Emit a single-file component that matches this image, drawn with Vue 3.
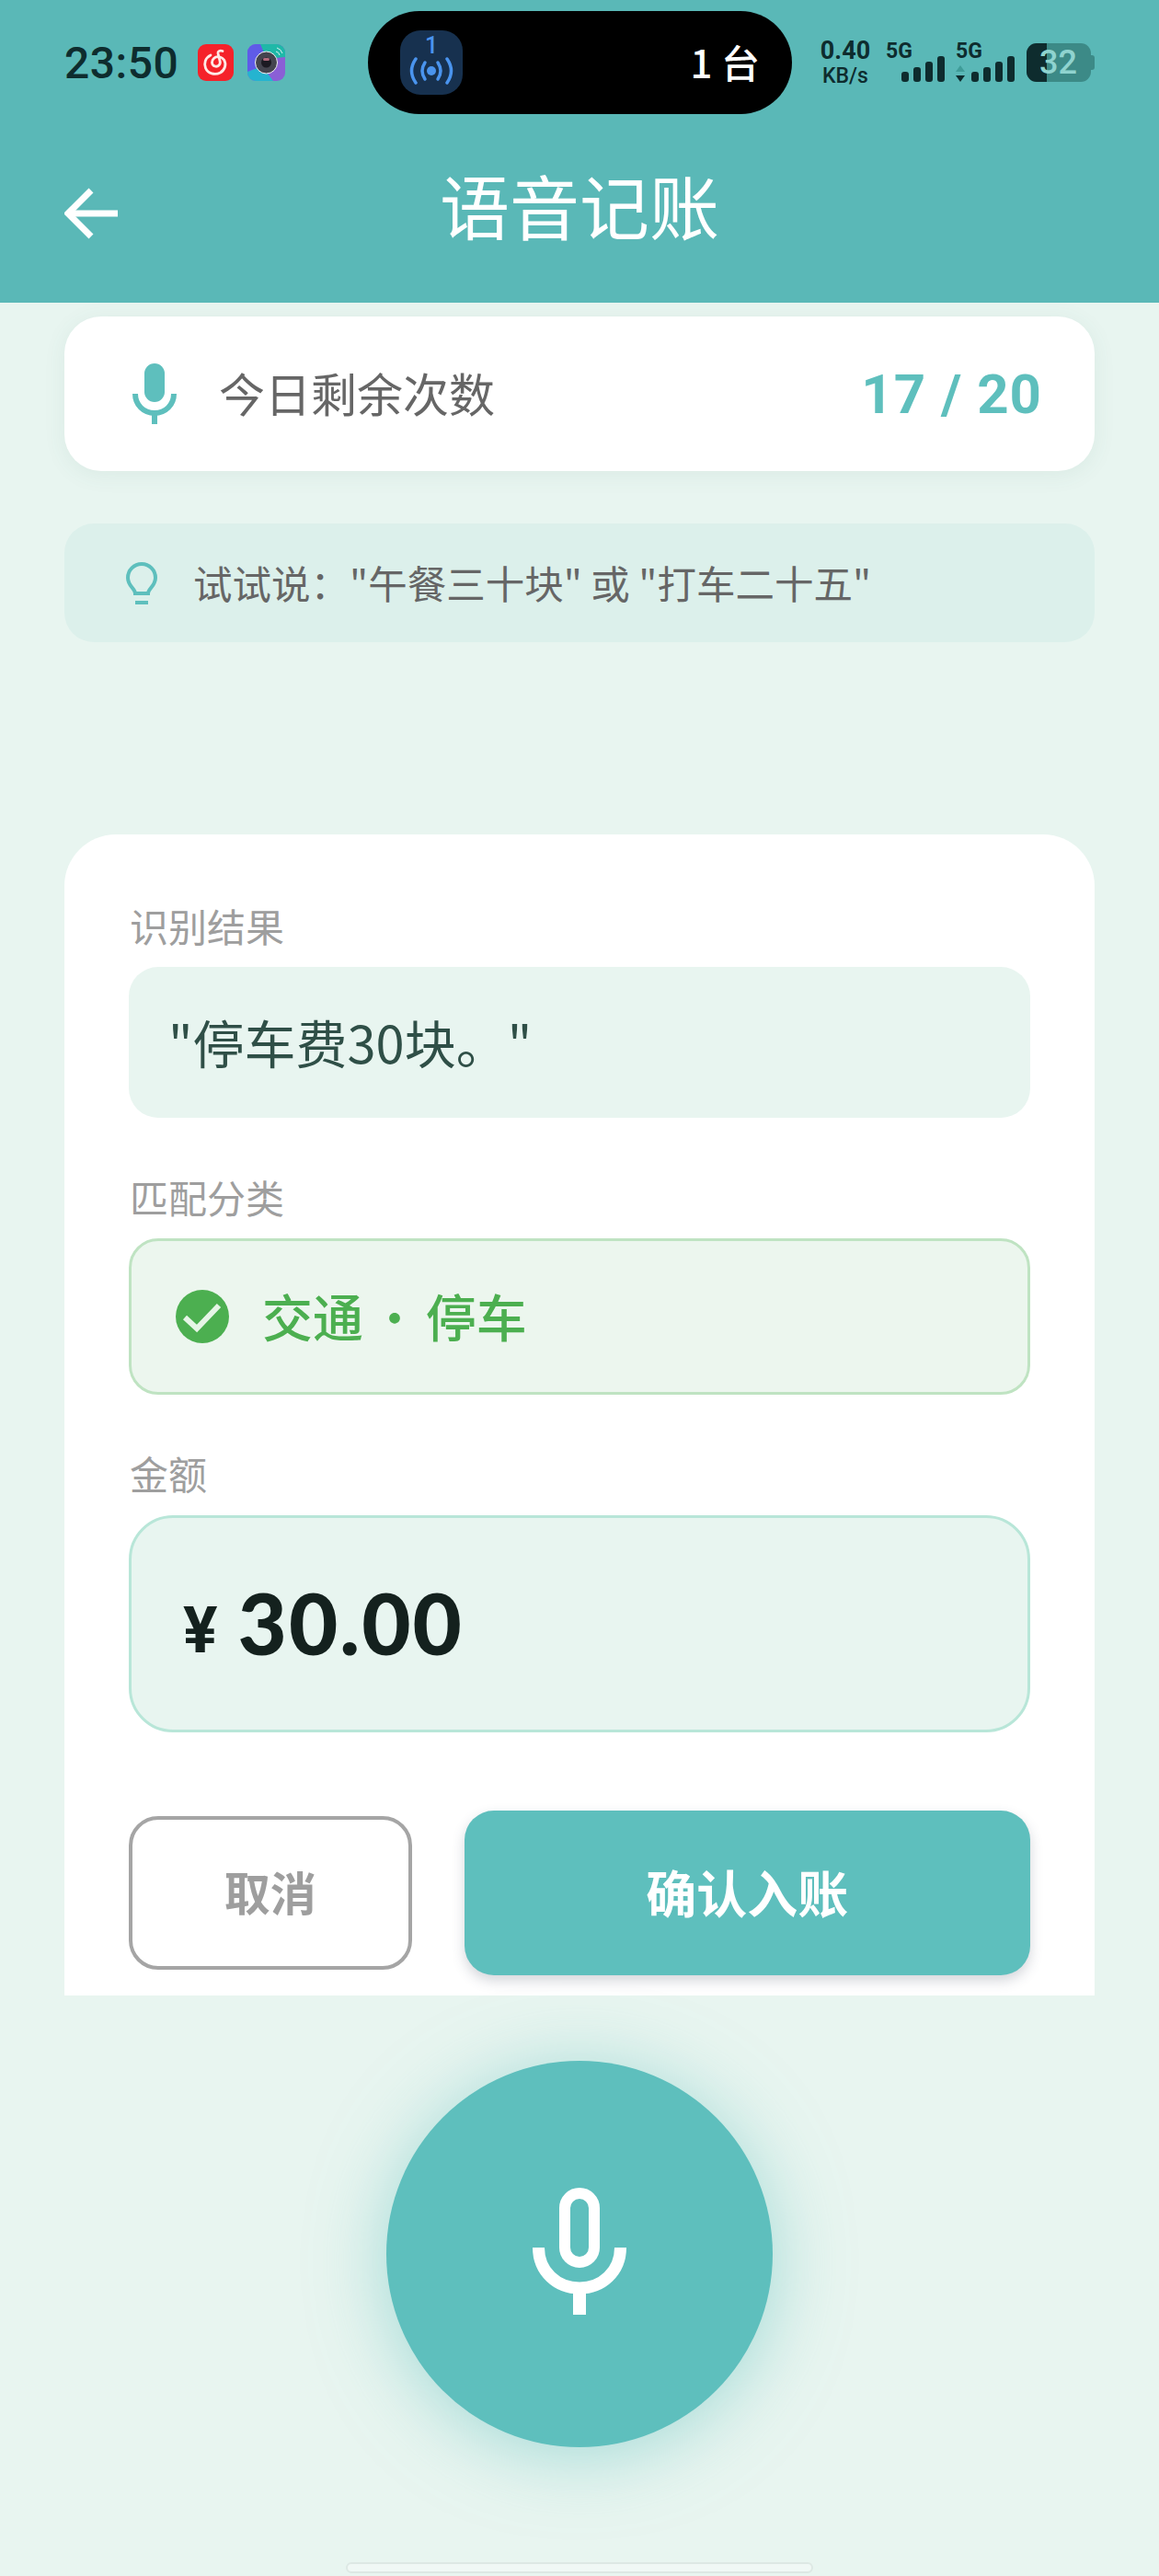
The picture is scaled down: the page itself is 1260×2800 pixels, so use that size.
<template>
  <div class="page">
    <header class="top">
      <!-- status bar -->
      <div class="status">
        <span class="time">23:50</span>
        <svg class="app-icon music" viewBox="0 0 39 40">
          <rect width="39" height="40" rx="9" fill="#f5222a" />
          <path
            d="M14 12C8 15 6.500 21 8.500 26c2.500 6 10 8 16 5 5-3 7-9 4-14-2-3-6-4-9-3-3 1.500-5 5-3.500 8 1.500 2.500 5 3 7 1 1.500-1.500 1.500-3.500 1-5L22 10c-.4-2 1.500-3.500 5-2.500"
            fill="none"
            stroke="#ffe9e6"
            stroke-width="2.800"
            stroke-linecap="round"
          />
        </svg>
        <svg class="app-icon cam" viewBox="0 0 41 40">
          <defs>
            <clipPath id="camClip"><rect width="41" height="40" rx="9" /></clipPath>
          </defs>
          <g clip-path="url(#camClip)">
            <rect width="41" height="40" fill="#8a5fd6" />
            <path d="M0 0h14l8 12-6 12L0 30z" fill="#5f5be8" />
            <path d="M14 0h27v14l-20 2z" fill="#1fb8a8" />
            <path d="M0 30l16-6 12 16H0z" fill="#25b4d0" />
          </g>
          <circle cx="20.500" cy="20" r="12" fill="#45454f" stroke="#f4f4f8" stroke-width="1" />
          <circle cx="20.500" cy="20" r="5.500" fill="#1c1a22" />
          <rect x="17" y="15" width="7" height="3" rx="1.500" fill="#b06a7c" />
          <path d="M31 8a5 5 0 0 1 4 4M32 4a9 9 0 0 1 6 6" fill="none" stroke="#d8f3ef" stroke-width="1" />
        </svg>
        <div class="island">
          <div class="hotspot">
            <span class="hotspot-num">1</span>
            <svg viewBox="0 0 52 30" class="hotspot-waves">
              <circle cx="26" cy="15" r="5" fill="#4a94ee" />
              <g fill="none" stroke="#4a94ee" stroke-width="3.500" stroke-linecap="round">
                <path d="M19 6Q13 15 19 24" />
                <path d="M33 6Q39 15 33 24" />
                <path d="M9 2Q0 15 9 28" />
                <path d="M43 2Q52 15 43 28" />
              </g>
            </svg>
          </div>
          <span class="island-text">1 台</span>
        </div>
        <div class="speed">
          <span class="speed-num">0.40</span>
          <span class="speed-unit">KB/s</span>
        </div>
        <div v-for="(sim, i) in sims" :key="i" class="sim" :class="{ second: sim.arrows }">
          <span class="sim-label">5G</span>
          <div class="sim-row">
            <svg v-if="sim.arrows" class="arrows" viewBox="0 0 10 18">
              <path d="M5 0l5 7H0z" fill="#3f9c98" />
              <path d="M0 11h10l-5 7z" fill="#0e2c2e" />
            </svg>
            <span
              v-for="h in barHeights"
              :key="h"
              class="bar"
              :style="{ height: h + 'px' }"
            ></span>
          </div>
        </div>
        <div class="battery">
          <span class="battery-fill"></span>
          <span class="battery-num">32</span>
          <span class="battery-tip"></span>
        </div>
      </div>

      <!-- title -->
      <div class="nav">
        <svg class="back" viewBox="0 0 58 56" fill="none" stroke="#fff" stroke-width="7">
          <path d="M29 3L4 28l25 25" />
          <path d="M4 28h54" />
        </svg>
        <h1 class="title">语音记账</h1>
      </div>
    </header>

    <main class="scroll">
      <section class="quota">
        <svg class="quota-mic" viewBox="0 0 48 66">
          <rect x="13" y="0" width="22" height="42" rx="11" fill="#5ebfbd" />
          <path d="M3 33c0 12 9 21 21 21s21-9 21-21" fill="none" stroke="#5ebfbd" stroke-width="6" />
          <path d="M24 52v14" stroke="#5ebfbd" stroke-width="6" />
        </svg>
        <span class="quota-label">今日剩余次数</span>
        <span class="quota-count">17 / 20</span>
      </section>

      <section class="tip">
        <svg class="tip-bulb" viewBox="0 0 34 46" fill="none" stroke="#5ebfbd" stroke-width="4">
          <path d="M10 34c0-5-8-8-8-17a15 15 0 0 1 30 0c0 9-8 12-8 17z" />
          <path d="M10 44h14" />
        </svg>
        <span class="tip-text">试试说："午餐三十块" 或 "打车二十五"</span>
      </section>

      <section class="result">
        <div class="field-label">识别结果</div>
        <div class="speech"><span>"停车费30块。"</span></div>

        <div class="field-label gap">匹配分类</div>
        <div class="category">
          <svg class="check" viewBox="0 0 58 58">
            <circle cx="29" cy="29" r="29" fill="#4caf50" />
            <path d="M10 30l13 12L47 17" fill="none" stroke="#e6f5e6" stroke-width="6" />
          </svg>
          <span class="category-text">交通 <span class="dot">·</span> 停车</span>
        </div>

        <div class="field-label gap amount-label">金额</div>
        <div class="amount">
          <span class="currency">¥</span>
          <span class="value">30.00</span>
        </div>

        <div class="actions">
          <button class="btn-cancel">取消</button>
          <button class="btn-confirm">确认入账</button>
        </div>
      </section>
    </main>

    <footer class="bottom">
      <button class="record" aria-label="开始录音">
        <svg viewBox="0 0 102 138" class="record-mic" fill="none" stroke="#fff">
          <rect x="35" y="6" width="32" height="75" rx="16" stroke-width="12" />
          <path d="M6.500 65c0 26 20 44 44.500 44s44.500-18 44.500-44" stroke-width="13" />
          <path d="M51 108v30" stroke-width="14" />
        </svg>
      </button>
      <div class="home-bar"></div>
    </footer>
  </div>
</template>

<script setup>
const sims = [{ arrows: false }, { arrows: true }]
const barHeights = [11, 16, 22, 28]
</script>

<style>
body {
  background: #e8f5f0;
}
</style>

<style scoped>
.page {
  width: 1260px;
  height: 2800px;
  overflow: hidden;
  background: #e8f5f0;
  font-family: "Noto Sans CJK SC", "Noto Sans", sans-serif;
}

/* Top block */
.top {
  height: 329px;
  background: #5ab8b7;
}

.status {
  height: 112px;
  padding: 12px 0 0 70px;
  display: flex;
  align-items: center;
  color: #0e2c2e;
}

.time {
  width: 123px;
  font-family: Roboto, sans-serif;
  font-size: 48px;
  font-weight: 500;
  letter-spacing: 0.5px;
}

.app-icon {
  display: block;
}

.music {
  width: 39px;
  height: 40px;
  margin-left: 22px;
}

.cam {
  width: 41px;
  height: 40px;
  margin-left: 15px;
}

.island {
  width: 461px;
  height: 112px;
  margin-left: 90px;
  padding: 0 35px 0 35px;
  box-sizing: border-box;
  display: flex;
  align-items: center;
  justify-content: space-between;
  background: #000;
  border-radius: 56px;
}

.hotspot {
  width: 68px;
  height: 70px;
  display: flex;
  flex-direction: column;
  align-items: center;
  background: #17314f;
  border-radius: 22px;
}

.hotspot-num {
  margin-top: 6px;
  height: 22px;
  line-height: 22px;
  font-family: Roboto, sans-serif;
  font-size: 25px;
  font-weight: 500;
  color: #4a94ee;
}

.hotspot-waves {
  width: 52px;
  height: 30px;
  margin-top: 1px;
}

.island-text {
  margin-bottom: 3px;
  color: #fff;
  font-size: 42px;
  font-weight: 500;
  line-height: 1;
}

.speed {
  width: 56px;
  margin-left: 30px;
  display: flex;
  flex-direction: column;
  align-items: center;
  font-family: Roboto, sans-serif;
  font-weight: 700;
  line-height: 1;
}

.speed-num {
  font-size: 27px;
}

.speed-unit {
  margin-top: 2px;
  font-size: 23px;
  font-weight: 500;
}

.sim {
  position: relative;
  width: 64px;
  height: 42px;
  margin-left: 16px;
  display: flex;
  justify-content: flex-end;
  align-items: flex-end;
}

.sim.second {
  margin-left: 12px;
}

.sim-label {
  position: absolute;
  left: 0;
  top: 0;
  font-family: Roboto, sans-serif;
  font-size: 23px;
  font-weight: 700;
  line-height: 18px;
}

.sim-row {
  display: flex;
  align-items: flex-end;
  gap: 5px;
}

.arrows {
  width: 10px;
  height: 18px;
  margin-right: 2px;
}

.bar {
  width: 8px;
  background: #0e2c2e;
  border-radius: 3px;
}

.battery {
  position: relative;
  width: 70px;
  height: 42px;
  margin-left: 13px;
  background: #3c8a87;
  border-radius: 11px;
}

.battery-fill {
  position: absolute;
  left: 0;
  top: 0;
  bottom: 0;
  width: 22px;
  background: #0e2c2e;
  border-radius: 11px 0 0 11px;
}

.battery-num {
  position: absolute;
  left: 14px;
  top: 0;
  font-family: Roboto, sans-serif;
  font-size: 36px;
  font-weight: 500;
  line-height: 42px;
  color: #8fd3cf;
}

.battery-tip {
  position: absolute;
  right: -4px;
  top: 13px;
  width: 4px;
  height: 16px;
  background: #3c8a87;
  border-radius: 0 3px 3px 0;
}

.nav {
  position: relative;
  height: 193px;
  padding-top: 3px;
  box-sizing: border-box;
  display: flex;
  align-items: center;
  justify-content: center;
}

.back {
  position: absolute;
  left: 70px;
  top: 66px;
  width: 58px;
  height: 56px;
  margin-top: 14px;
}

.title {
  margin: 0;
  color: #fff;
  font-size: 76px;
  font-weight: 400;
  line-height: 1;
}

/* Scrolling content */
.scroll {
  height: 1840px;
  padding: 15px 70px 0;
  box-sizing: border-box;
  overflow: hidden;
}

.quota {
  height: 168px;
  padding: 0 57px 0 74px;
  display: flex;
  align-items: center;
  background: #fff;
  border-radius: 40px;
  box-shadow: 0 4px 24px rgba(60, 110, 100, 0.08);
}

.quota-mic {
  width: 48px;
  height: 66px;
}

.quota-label {
  margin: 0 0 4px 46px;
  flex: 1;
  font-size: 50px;
  color: #666;
}

.quota-count {
  font-family: Roboto, sans-serif;
  font-size: 60px;
  font-weight: 700;
  color: #5ebfbd;
  letter-spacing: 1px;
}

.tip {
  height: 129px;
  margin-top: 57px;
  padding-left: 67px;
  display: flex;
  align-items: center;
  background: #dcf0eb;
  border-radius: 32px;
}

.tip-bulb {
  width: 34px;
  height: 46px;
}

.tip-text {
  margin: 0 0 3px 39px;
  font-size: 42.500px;
  color: #666;
}

.result {
  height: 1400px;
  margin-top: 209px;
  padding: 71px 70px 0;
  box-sizing: border-box;
  background: #fff;
  border-radius: 56px;
}

.field-label {
  height: 56px;
  margin-bottom: 17px;
  padding-left: 1px;
  font-size: 42px;
  line-height: 56px;
  color: #9e9e9e;
}

.field-label.gap {
  margin-top: 58px;
}

.field-label.amount-label {
  margin-top: 57px;
  margin-bottom: 18px;
}

.speech {
  height: 164px;
  padding-left: 43px;
  display: flex;
  align-items: center;
  background: #e8f5f0;
  border-radius: 32px;
  font-size: 56px;
  color: #2f4f47;
}

.speech span {
  margin-bottom: 3px;
}

.category {
  height: 170px;
  padding-left: 48px;
  box-sizing: border-box;
  display: flex;
  align-items: center;
  background: #ecf6ee;
  border: 3px solid #bfe3c2;
  border-radius: 32px;
  font-size: 55px;
  font-weight: 500;
  color: #4caf50;
}

.check {
  width: 58px;
  height: 58px;
  margin-right: 36px;
}

.category-text {
  margin-bottom: 4px;
  word-spacing: -6px;
}

.dot {
  font-weight: 400;
}

.amount {
  height: 236px;
  padding-left: 56px;
  box-sizing: border-box;
  display: flex;
  align-items: center;
  background: #e8f5f0;
  border: 3px solid #b8e6d8;
  border-radius: 48px;
  color: #14211e;
}

.currency {
  font-family: Roboto, sans-serif;
  font-size: 70px;
  font-weight: 700;
  margin-top: 14px;
}

.value {
  margin: 0 0 4px 22px;
  font-family: Lato, Roboto, sans-serif;
  font-size: 92px;
  font-weight: 900;
  letter-spacing: 2px;
}

.actions {
  margin-top: 85px;
  display: grid;
  grid-template-columns: 1fr 2fr;
  align-items: center;
  gap: 57px;
}

.btn-cancel,
.btn-confirm {
  font-family: inherit;
  font-weight: 700;
  padding: 0 0 5px;
}

.btn-cancel {
  height: 167px;
  background: #fff;
  border: 4px solid #a5a5a5;
  border-radius: 32px;
  font-size: 50px;
  color: #9e9e9e;
}

.btn-confirm {
  height: 179px;
  background: #5ebfbd;
  border: none;
  border-radius: 32px;
  font-size: 55px;
  color: #fff;
  box-shadow: 0 6px 14px rgba(60, 70, 90, 0.22);
}

/* Bottom record area */
.bottom {
  height: 631px;
  padding-top: 71px;
  box-sizing: border-box;
  display: flex;
  flex-direction: column;
  align-items: center;
}

.record {
  width: 420px;
  height: 420px;
  flex-shrink: 0;
  padding: 0;
  display: flex;
  align-items: center;
  justify-content: center;
  background: #5ebfbd;
  border: none;
  border-radius: 50%;
  box-shadow: 0 8px 80px rgba(94, 191, 189, 0.5);
}

.record-mic {
  width: 102px;
  height: 138px;
  margin-bottom: 6px;
}

.home-bar {
  width: 508px;
  height: 12px;
  margin-top: 125px;
  box-sizing: border-box;
  background: #f0f8f5;
  border: 2px solid #dde8e4;
  border-radius: 6px;
}
</style>
